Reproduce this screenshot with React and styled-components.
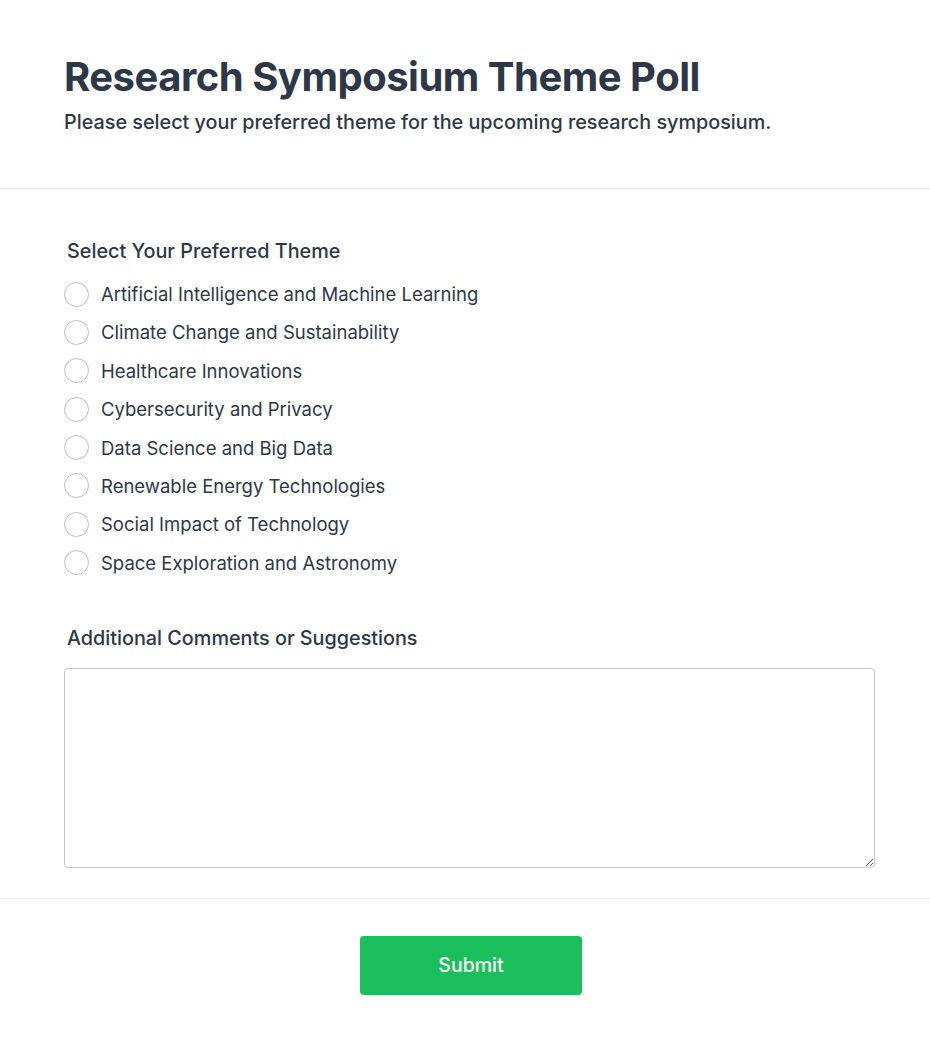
import React from "react";
import styled, { createGlobalStyle } from "styled-components";

const Global = createGlobalStyle`
  html, body { margin: 0; padding: 0; background: #ffffff; }
  body { font-family: Inter, "Noto Sans", sans-serif; color: #2d3748; }
  * { box-sizing: border-box; }
`;

const Page = styled.div`
  width: 930px;
  min-height: 1045px;
  background: #fff;
`;

const Header = styled.header`
  padding: 52px 55px 52px 64px;
  border-bottom: 1px solid #e2e2ea;
`;

const Title = styled.h1`
  margin: 0;
  font-size: 40px;
  line-height: 50px;
  font-weight: 700;
  color: #2d3748;
  letter-spacing: -0.5px;
`;

const Subtitle = styled.p`
  margin: 6px 0 0;
  font-size: 19.8px;
  line-height: 28px;
  font-weight: 500;
  color: #2d3748;
`;

const Form = styled.form`
  padding: 48px 55px 30px 64px;
  border-bottom: 1px solid #e8e8ee;
`;

const Fieldset = styled.fieldset`
  border: 0;
  margin: 0 0 46px;
  padding: 0;
`;

const Legend = styled.div`
  display: block;
  font-size: 19.8px;
  line-height: 28px;
  font-weight: 500;
  color: #2d3748;
  padding-left: 3px;
  margin-bottom: ${(p) => p.$mb || 14}px;
`;

const Options = styled.div`
  display: flex;
  flex-direction: column;
  gap: 8.4px;
`;

const Option = styled.label`
  display: flex;
  align-items: center;
  gap: 12px;
  font-size: 18.5px;
  line-height: 30px;
  color: #2d3748;
  cursor: pointer;
`;

const Radio = styled.input.attrs({ type: "radio" })`
  appearance: none;
  margin: 0;
  width: 25px;
  height: 25px;
  border-radius: 50%;
  border: 1.3px solid #b9bdc7;
  background: #fff;
  flex-shrink: 0;
`;

const TextArea = styled.textarea`
  display: block;
  width: 100%;
  height: 200px;
  border: 1px solid #c4c7d0;
  border-radius: 4px;
  font-family: inherit;
  font-size: 16px;
  padding: 8px;
  resize: vertical;
  outline: none;
`;

const Footer = styled.div`
  display: flex;
  justify-content: center;
  padding: 37px 0 50px 12px;
`;

const SubmitButton = styled.button`
  width: 222px;
  height: 59px;
  border: 0;
  border-radius: 4px;
  background: #1abe5d;
  color: #fff;
  font-family: inherit;
  font-size: 19.5px;
  font-weight: 500;
  cursor: pointer;
`;

const themes = [
  "Artificial Intelligence and Machine Learning",
  "Climate Change and Sustainability",
  "Healthcare Innovations",
  "Cybersecurity and Privacy",
  "Data Science and Big Data",
  "Renewable Energy Technologies",
  "Social Impact of Technology",
  "Space Exploration and Astronomy",
];

export default function App() {
  return (
    <Page>
      <Global />
      <Header>
        <Title>Research Symposium Theme Poll</Title>
        <Subtitle>Please select your preferred theme for the upcoming research symposium.</Subtitle>
      </Header>
      <Form onSubmit={(e) => e.preventDefault()}>
        <Fieldset>
          <Legend>Select Your Preferred Theme</Legend>
          <Options>
            {themes.map((t) => (
              <Option key={t}>
                <Radio name="theme" value={t} />
                {t}
              </Option>
            ))}
          </Options>
        </Fieldset>
        <Legend as="label" $mb={16}>Additional Comments or Suggestions</Legend>
        <TextArea />
      </Form>
      <Footer>
        <SubmitButton type="button">Submit</SubmitButton>
      </Footer>
    </Page>
  );
}
